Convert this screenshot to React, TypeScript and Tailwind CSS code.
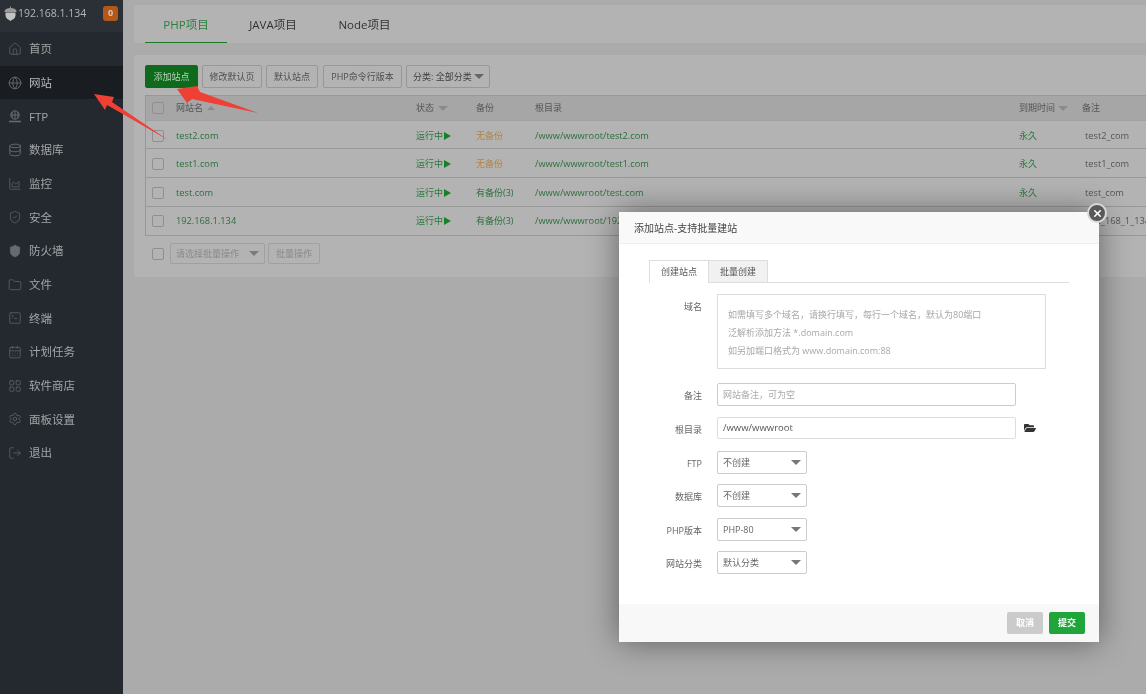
import React from "react";
import { Home, Globe, Database, ShieldCheck, Shield, Folder, SquareTerminal, CalendarDays, LayoutGrid, Settings, LogOut, AreaChart, X } from "lucide-react";
import { FaFolderOpen } from "react-icons/fa";

const font = { fontFamily: '"Open Sans","Noto Sans CJK SC",sans-serif' };

function FtpIcon() {
  return (
    <svg width="14" height="14" viewBox="0 0 14 14" fill="none" stroke="currentColor" strokeWidth="1">
      <circle cx="7" cy="6" r="4.2" />
      <path d="M2.8 6h8.4M7 1.8v8.4M4.5 2.8C3.8 5 3.8 7 4.5 9.2M9.500 2.8c.7 2.2.7 4.2 0 6.4" />
      <path d="M1 12.5h12" strokeWidth="1.6" />
    </svg>
  );
}

const menu: [string, React.ReactNode][] = [
  ["首页", <Home size={14} strokeWidth={1.2} />],
  ["网站", <Globe size={14} strokeWidth={1.6} />],
  ["FTP", <FtpIcon />],
  ["数据库", <Database size={14} strokeWidth={1.6} />],
  ["监控", <AreaChart size={14} strokeWidth={1.2} />],
  ["安全", <ShieldCheck size={14} strokeWidth={1.2} />],
  ["防火墙", <Shield size={14} strokeWidth={1.2} fill="currentColor" />],
  ["文件", <Folder size={14} strokeWidth={1.2} />],
  ["终端", <SquareTerminal size={14} strokeWidth={1.2} />],
  ["计划任务", <CalendarDays size={14} strokeWidth={1.2} />],
  ["软件商店", <LayoutGrid size={14} strokeWidth={1.2} />],
  ["面板设置", <Settings size={14} strokeWidth={1.2} />],
  ["退出", <LogOut size={14} strokeWidth={1.2} />],
];

const rows = [
  ["test2.com", "无备份", "/www/wwwroot/test2.com", "test2_com", "h-[28px] pt-[2px]"],
  ["test1.com", "无备份", "/www/wwwroot/test1.com", "test1_com", "h-[29px] pt-[2px]"],
  ["test.com", "有备份(3)", "/www/wwwroot/test.com", "test_com", "h-[29px] pt-[2px]"],
  ["192.168.1.134", "有备份(3)", "/www/wwwroot/192.168.1.134", "192_168_1_134", "h-[28px]"],
];

function Caret({ c = "border-t-[#666]" }: { c?: string }) {
  return <span className={`inline-block w-0 h-0 border-x-[5px] border-x-transparent border-t-[5px] ${c}`} />;
}

function Check() {
  return <span className="block w-[12px] h-[12px] border border-[#8f8f8f] rounded-[2px]" />;
}

function Btn({ children, primary, className }: { children: React.ReactNode; primary?: boolean; className?: string }) {
  return (
    <div className={`h-[23px] flex items-center justify-center rounded-[2px] border text-[9px] ${primary ? "bg-[#0f6a1c] border-[#0f6a1c] text-[#b9d3bb]" : "border-[#979797] text-[#4f4f4f]"} ${className ?? ""}`}>
      {children}
    </div>
  );
}

function Field({ label, children, className }: { label: string; children: React.ReactNode; className?: string }) {
  return (
    <div className={`flex items-start ${className ?? ""}`}>
      <div className="w-[83px] text-right text-[9px] leading-[13px] pt-[6px] text-[#666]">{label}</div>
      <div className="ml-[15px] flex items-center">{children}</div>
    </div>
  );
}

function Sel({ text }: { text: string }) {
  return (
    <div className="w-[90px] h-[23px] border border-[#ccc] rounded-[2px] flex items-center justify-between pl-[5px] pr-[5px] text-[9px] text-[#666]">
      <span>{text}</span>
      <Caret c="border-t-[#777]" />
    </div>
  );
}

export default function App() {
  return (
    <div className="relative flex w-full h-screen overflow-hidden bg-[#ababab] blur-[0.4px]" style={font}>
      <aside className="w-[123px] shrink-0 bg-[#23292f] flex flex-col text-[#a3a5a7]">
        <div className="h-[32px] shrink-0 bg-[#2a3036] flex items-center pl-[4px] pr-[5px] pb-[6px]">
          <svg className="shrink-0" width="13" height="15" viewBox="0 0 13 15">
            <path d="M6 0.500h1v1.500h-1z" fill="#9a9a9a" />
            <path d="M0.500 5C1 3 3.500 2 6.500 2s5.500 1 6 3v1h-12z" fill="#9a9a9a" />
            <path d="M1.500 6.500h10v3c0 2.500-2.500 4-5 5.500-2.500-1.500-5-3-5-5.500z" fill="#c2c2c2" />
          </svg>
          <span className="ml-[1px] text-[10.5px] text-[#b4b5b7] leading-none">192.168.1.134</span>
          <span className="ml-auto w-[15px] h-[15px] rounded-[3px] bg-[#b4581a] text-[#dccbb9] text-[9px] font-bold flex items-center justify-center">0</span>
        </div>
        <nav className="flex flex-col">
          {menu.map(([t, icon], i) => (
            <div key={t} className={`h-[33.7px] flex items-center pl-[8px] gap-[7px] text-[11.5px] ${i === 1 ? "bg-[#191d22] text-[#b9babb]" : ""}`}>
              <span className="w-[14px] h-[14px] flex items-center justify-center text-[#666b70]">{icon}</span>
              <span>{t}</span>
            </div>
          ))}
        </nav>
      </aside>

      <main className="flex-1 min-w-0 flex flex-col pl-[11px] pt-[5px]">
        <div className="h-[38px] bg-[#b3b3b3] rounded-l-[2px] flex pl-[11px] pt-[2px] text-[11.5px] text-[#333]">
          <div className="w-[82px] flex items-center justify-center border-b border-[#1a7a28] text-[#2a7f3a]">PHP项目</div>
          <div className="w-[92px] flex items-center justify-center pb-[1px]">JAVA项目</div>
          <div className="w-[91px] flex items-center justify-center pb-[1px]">Node项目</div>
        </div>

        <section className="mt-[12px] h-[222px] bg-[#b3b3b3] pl-[11px] pt-[10px] rounded-l-[2px]">
          <div className="flex gap-[4px]">
            <Btn primary className="w-[53px]">添加站点</Btn>
            <Btn className="w-[60px]">修改默认页</Btn>
            <Btn className="w-[52px]">默认站点</Btn>
            <Btn className="w-[79px] ml-[1px]">PHP命令行版本</Btn>
            <div className="h-[23px] w-[84px] flex items-center justify-between rounded-[2px] border border-[#979797] pl-[6px] pr-[5px] text-[9px] text-[#404040]">
              <span>分类: 全部分类</span>
              <Caret />
            </div>
          </div>

          <div className="mt-[7px] border border-r-0 border-[#979797] text-[9px]">
            <div className="h-[25px] bg-[#a6a6a6] flex items-center text-[#555] border-b border-[#a0a0a0]">
              <div className="w-[30px] shrink-0 pl-[6px]"><Check /></div>
              <div className="w-[240px] shrink-0 flex items-center gap-[4px]">网站名 <span className="inline-block w-0 h-0 border-x-[4px] border-x-transparent border-b-[4px] border-b-[#8a8a8a]" /></div>
              <div className="w-[60px] shrink-0 flex items-center gap-[4px]">状态 <Caret c="border-t-[#8a8a8a]" /></div>
              <div className="w-[59px] shrink-0">备份</div>
              <div className="w-[484px] shrink-0">根目录</div>
              <div className="w-[63px] shrink-0 flex items-center gap-[3px] whitespace-nowrap">到期时间 <Caret c="border-t-[#8a8a8a]" /></div>
              <div className="shrink-0">备注</div>
            </div>
            {rows.map(([name, bak, path, note, h], i) => (
              <div key={name} className={`${h} flex items-center whitespace-nowrap ${i < 3 ? "border-b border-[#979797]" : ""}`}>
                <div className="w-[30px] shrink-0 pl-[6px]"><Check /></div>
                <div className="w-[240px] shrink-0 text-[9.25px] text-[#2a6f3c]">{name}</div>
                <div className="w-[60px] shrink-0 text-[#2a7a3e] flex items-center">运行中<span className="ml-[1px] inline-block w-0 h-0 border-y-[4px] border-y-transparent border-l-[7px] border-l-[#17812a]" /></div>
                <div className={`w-[59px] shrink-0 ${bak === "无备份" ? "text-[#b1843f]" : "text-[#2a6f3c]"}`}>{bak}</div>
                <div className="w-[484px] shrink-0 text-[9.25px] text-[#2a6f3c]">{path}</div>
                <div className="w-[66px] shrink-0 text-[#2a7a3e]">永久</div>
                <div className="shrink-0 text-[9.25px] text-[#555]">{note}</div>
              </div>
            ))}
          </div>

          <div className="mt-[7px] flex items-center text-[9px] text-[#8a8a8a]">
            <div className="pl-[7px] w-[25px]"><Check /></div>
            <div className="w-[95px] h-[21px] border border-[#a0a0a0] rounded-[2px] flex items-center justify-between pl-[5px] pr-[5px]">
              <span>请选择批量操作</span><Caret c="border-t-[#7a7a7a]" />
            </div>
            <div className="ml-[3px] w-[52px] h-[21px] border border-[#a0a0a0] rounded-[2px] flex items-center justify-center">批量操作</div>
          </div>
        </section>
      </main>

      {/* red annotation arrows */}
      <svg className="absolute left-0 top-0 pointer-events-none" width="300" height="160" viewBox="0 0 300 160">
        <polygon points="94,94 114,97 112,102 168,140 107,105 105,110" fill="#ee4035" />
        <polygon points="177,89 197,86 200,92 258,113 192,99 187,103" fill="#ee4035" />
      </svg>

      {/* modal */}
      <div className="absolute left-[619px] top-[212px] w-[480px] h-[430px] bg-white flex flex-col shadow-[0_0_30px_rgba(0,0,0,0.45)]">
        <div className="h-[32px] shrink-0 bg-[#f9f9f9] border-b border-[#eee] flex items-center pl-[15px] pt-[2px] text-[10px] text-[#444]">添加站点-支持批量建站</div>
        <div className="flex-1 pl-[30px] pt-[16px]">
          <div className="w-[420px] h-[23px] border-b border-[#ddd] flex text-[9px] text-[#555]">
            <div className="w-[60px] h-[23px] border border-b-0 border-[#ddd] bg-white flex items-center justify-center">创建站点</div>
            <div className="w-[59px] h-[23px] border border-l-0 border-[#ddd] bg-[#f1f1f1] flex items-center justify-center">批量创建</div>
          </div>
          <div className="-ml-[30px] mt-[11px] flex flex-col">
            <Field label="域名">
              <div className="w-[329px] h-[75px] border border-[#ddd] pl-[10px] pt-[11px] text-[9px] leading-[18px] text-[#a8a8a8]">
                <div>如需填写多个域名，请换行填写，每行一个域名，默认为80端口</div>
                <div>泛解析添加方法 *.domain.com</div>
                <div>如另加端口格式为 www.domain.com:88</div>
              </div>
            </Field>
            <Field label="备注" className="mt-[14px]">
              <div className="w-[299px] h-[23px] border border-[#ccc] rounded-[2px] flex items-center pl-[5px] text-[9px] text-[#aaa]">网站备注，可为空</div>
            </Field>
            <Field label="根目录" className="mt-[11px]">
              <div className="w-[299px] h-[22px] border border-[#ddd] rounded-[2px] flex items-center pl-[5px] text-[9.5px] text-[#555]">/www/wwwroot</div>
              <FaFolderOpen size={12} className="ml-[8px] text-[#333]" />
            </Field>
            <Field label="FTP" className="mt-[12px]"><Sel text="不创建" /></Field>
            <Field label="数据库" className="mt-[10px]"><Sel text="不创建" /></Field>
            <Field label="PHP版本" className="mt-[11px]"><Sel text="PHP-80" /></Field>
            <Field label="网站分类" className="mt-[10px]"><Sel text="默认分类" /></Field>
          </div>
        </div>
        <div className="h-[38px] shrink-0 bg-[#f8f8f8] flex items-start justify-end gap-[6px] pr-[14px] pt-[8px] text-[9px] font-bold">
          <div className="w-[36px] h-[22px] rounded-[2px] bg-[#cbcbcb] text-white flex items-center justify-center">取消</div>
          <div className="w-[36px] h-[22px] rounded-[2px] bg-[#20a53a] text-white flex items-center justify-center">提交</div>
        </div>
        <div className="absolute -right-[8px] -top-[9px] w-[20px] h-[20px] rounded-full bg-[#595959] border-2 border-[#d8d8d8] flex items-center justify-center">
          <X size={11} strokeWidth={3.5} className="text-white" />
        </div>
      </div>
    </div>
  );
}
